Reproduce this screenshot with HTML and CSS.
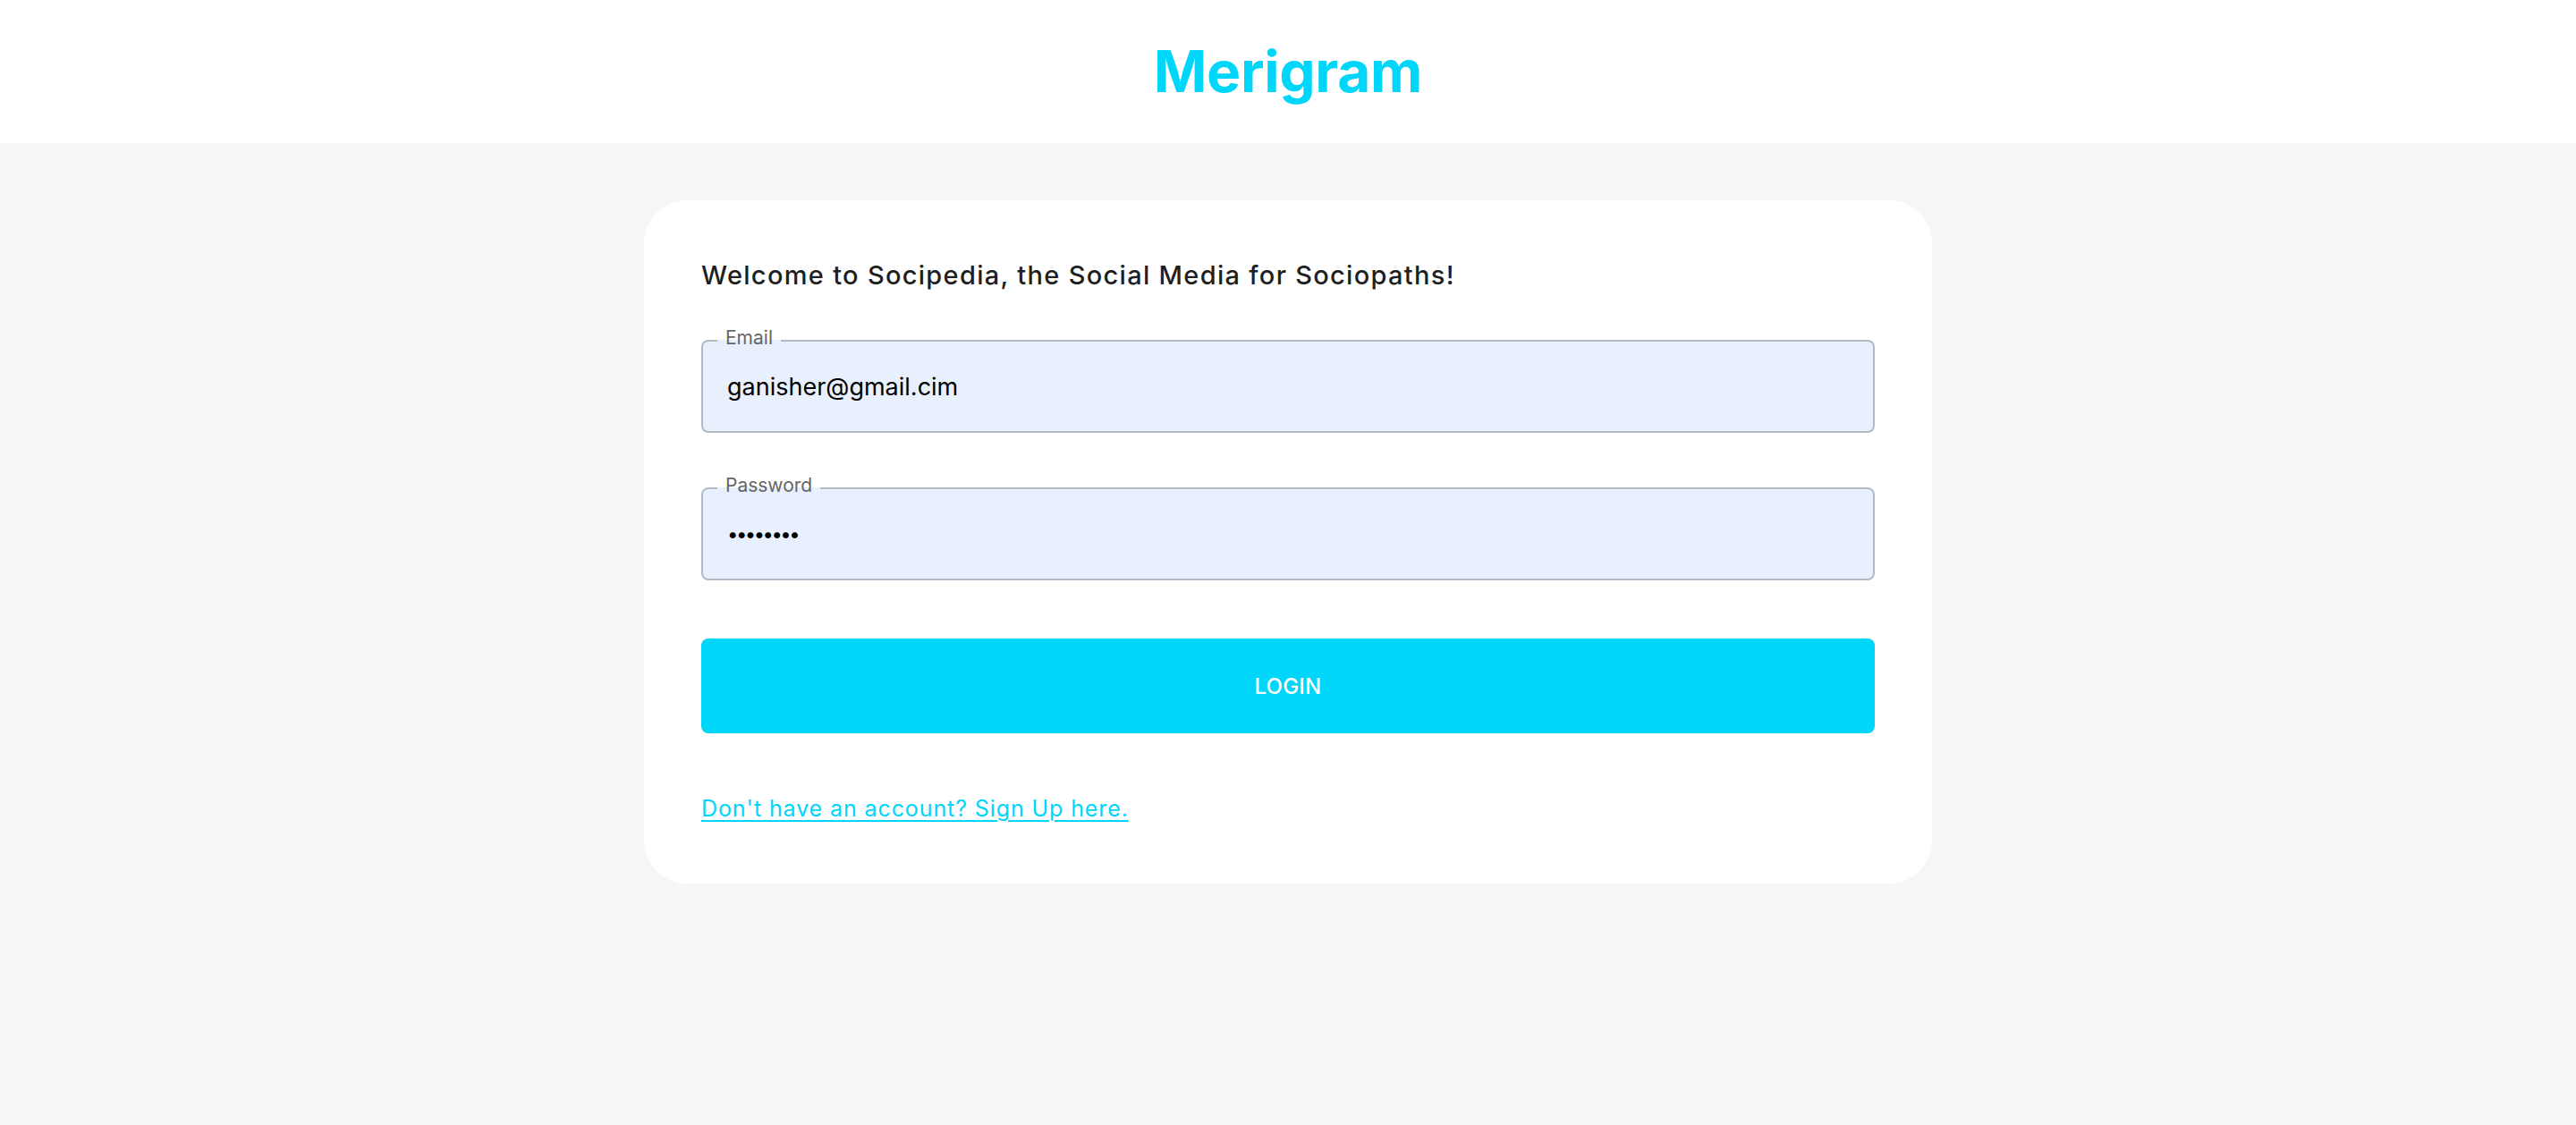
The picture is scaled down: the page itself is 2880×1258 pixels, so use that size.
FILE: index.html
```html
<!DOCTYPE html>
<html lang="en">
<head>
<meta charset="utf-8">
<title>Merigram</title>
<link rel="stylesheet" href="styles.css">
</head>
<body>
<header class="topbar">
  <h1 class="brand">Merigram</h1>
</header>
<main class="card">
  <h2 class="welcome">Welcome to Socipedia, the Social Media for Sociopaths!</h2>
  <form class="form">
    <div class="field">
      <span class="legend">Email</span>
      <input class="input" type="text" value="ganisher@gmail.cim">
    </div>
    <div class="field">
      <span class="legend">Password</span>
      <input class="input input-password" type="password" value="12345678">
    </div>
    <button class="login" type="button">LOGIN</button>
  </form>
  <a class="signup" href="#">Don't have an account? Sign Up here.</a>
</main>
</body>
</html>
```

FILE: styles.css
```css
* { box-sizing: border-box; }

html, body {
  margin: 0;
  padding: 0;
}

body {
  background: #f6f6f6;
  font-family: Inter, "Noto Sans", "Liberation Sans", sans-serif;
  min-height: 1258px;
}

.topbar {
  height: 160px;
  background: #ffffff;
  display: flex;
  align-items: center;
  justify-content: center;
}

.brand {
  margin: 0;
  font-size: 64px;
  line-height: 78px;
  font-weight: 700;
  color: #00d5fa;
  letter-spacing: -0.3px;
}

.card {
  width: 1440px;
  margin: 64px auto 0;
  padding: 64px 64px 66px;
  background: #ffffff;
  border-radius: 48px;
  display: flex;
  flex-direction: column;
}

.welcome {
  margin: 0 0 52px;
  font-size: 29px;
  line-height: 40px;
  font-weight: 500;
  letter-spacing: 1.3px;
  color: #1f1f1f;
}

.form {
  display: flex;
  flex-direction: column;
  gap: 61px;
}

.field {
  position: relative;
  height: 104px;
}

.input {
  width: 100%;
  height: 104px;
  margin: 0;
  padding: 0 27px;
  border: 2px solid #b3b9c5;
  border-radius: 8px;
  background: #e8f0fe;
  color: #000000;
  font-family: Inter, "Noto Sans", sans-serif;
  font-size: 27px;
  outline: none;
}

.input-password {
  font-size: 22px;
  letter-spacing: -2.5px;
}

.legend {
  position: absolute;
  left: 18px;
  top: -16px;
  padding: 0 9px;
  background: linear-gradient(to bottom, #ffffff 0, #ffffff 16px, #e8f0fe 16px);
  color: #666666;
  font-size: 21px;
  line-height: 28px;
}

.login {
  margin-top: 4px;
  height: 106px;
  border: none;
  border-radius: 8px;
  background: #00d5fa;
  color: #ffffff;
  font-family: Inter, "Noto Sans", sans-serif;
  font-size: 24px;
  font-weight: 500;
  letter-spacing: 0.2px;
  cursor: pointer;
}

.signup {
  margin-top: 66px;
  align-self: flex-start;
  color: #00d5fa;
  font-size: 25px;
  line-height: 36px;
  letter-spacing: 0.9px;
  text-decoration: underline;
  text-decoration-thickness: 2px;
  text-underline-offset: 4px;
}
```
